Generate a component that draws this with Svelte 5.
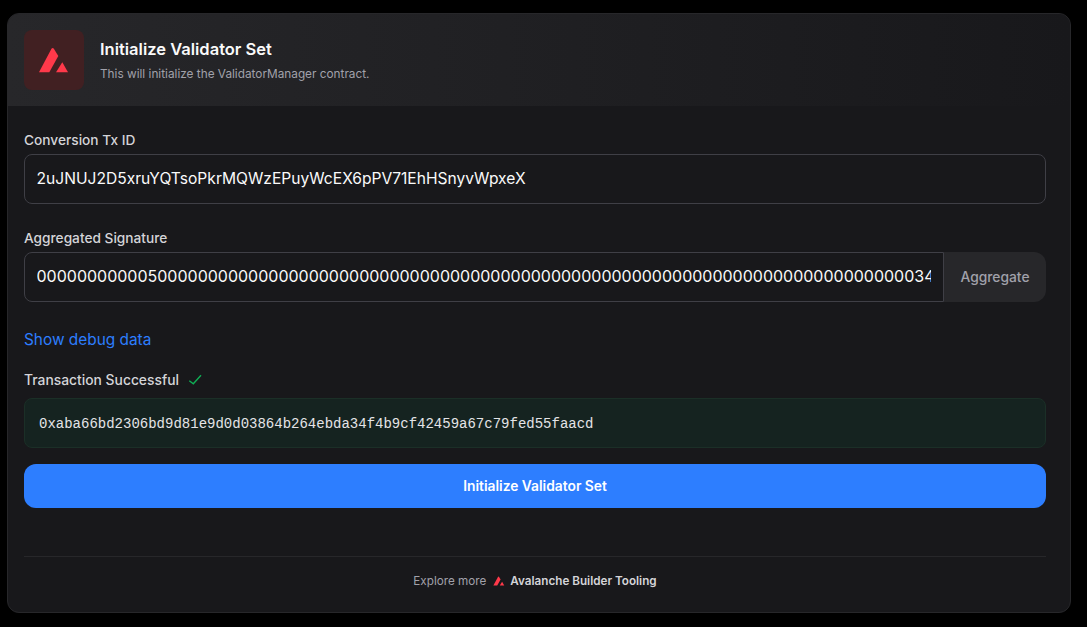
<script>
	const txId = '2uJNUJ2D5xruYQTsoPkrMQWzEPuyWcEX6pPV71EhHSnyvWpxeX';
	const signature = '000000000005000000000000000000000000000000000000000000000000000000000000000000000000000340000000000000000';
	const txHash = '0xaba66bd2306bd9d81e9d0d03864b264ebda34f4b9cf42459a67c79fed55faacd';
</script>

<svelte:head><title>Initialize Validator Set</title></svelte:head>

<main class="page">
	<section class="card">
		<header class="head">
			<div class="logo">
				<svg width="32" height="26" viewBox="0 0 32 26" aria-hidden="true">
					<path d="M13.6 1.6 Q14.7 0.2 15.7 1.6 L20.3 9 L11.3 25.3 H1 Z" fill="#ff394a" />
					<path d="M24.3 15.3 L30 25.3 H18 Z" fill="#ff394a" />
				</svg>
			</div>
			<div class="titles">
				<h1>Initialize Validator Set</h1>
				<p>This will initialize the ValidatorManager contract.</p>
			</div>
		</header>

		<div class="body">
			<div class="field">
				<label for="tx">Conversion Tx ID</label>
				<input id="tx" class="tx" value={txId} />
			</div>

			<div class="field">
				<label for="sig">Aggregated Signature</label>
				<div class="joined">
					<input id="sig" value={signature} />
					<button class="aggregate">Aggregate</button>
				</div>
			</div>

			<button class="debug">Show debug data</button>

			<div class="success-label">
				<span>Transaction Successful</span>
				<svg width="14" height="14" viewBox="0 0 14 14" fill="none" aria-hidden="true">
					<path d="M1.3 7.7 L5.3 10.7 L13 2.3" stroke="#0fae55" stroke-width="1.4" />
				</svg>
			</div>
			<div class="hash">{txHash}</div>

			<button class="primary">Initialize Validator Set</button>

			<footer class="foot">
				<span class="more">Explore more</span>
				<svg width="12" height="10" viewBox="0 0 32 26" aria-hidden="true">
					<path d="M13.6 1.6 Q14.7 0.2 15.7 1.6 L20.3 9 L11.3 25.3 H1 Z" fill="#ff394a" />
					<path d="M24.3 15.3 L30 25.3 H18 Z" fill="#ff394a" />
				</svg>
				<span class="brand">Avalanche Builder Tooling</span>
			</footer>
		</div>
	</section>
</main>

<style>
	:global(body) { margin: 0; background: #000; font-family: Inter, "Liberation Sans", sans-serif; }
	.page { padding: 13px 16px 14px 7px; height: 600px; }
	.card {
		display: flex;
		flex-direction: column;
		height: 100%;
		box-sizing: border-box;
		background: #18181b;
		border: 1px solid #27272a;
		border-radius: 12px;
		overflow: hidden;
	}
	.head {
		display: flex;
		align-items: center;
		gap: 16px;
		padding: 16px;
		background: linear-gradient(to right, #27272a, #18181b);
	}
	.logo {
		display: flex;
		align-items: center;
		justify-content: center;
		width: 60px;
		height: 60px;
		border-radius: 8px;
		background: #412022;
	}
	.titles { padding-bottom: 2px; }
	h1 { margin: 0 0 5px; font-size: 16.5px; line-height: 24px; font-weight: 600; color: #fafafa; }
	.head p { margin: 0; font-size: 11.8px; line-height: 16px; color: #a1a1aa; }
	.body { display: flex; flex-direction: column; flex: 1; padding: 24px 24px 0 16px; }
	.field { margin-bottom: 24px; }
	label {
		display: block;
		margin-bottom: 4px;
		font-size: 13.7px;
		line-height: 20px;
		font-weight: 500;
		color: #d4d4d8;
	}
	input {
		display: block;
		width: 100%;
		height: 50px;
		box-sizing: border-box;
		padding: 0 12px 2px 11.5px;
		background: #18181b;
		border: 1px solid #3f3f46;
		border-radius: 8px;
		outline: none;
		color: #fafafa;
		font: 400 16px Inter, "Liberation Sans", sans-serif;
	}
	.tx { font-size: 15.6px; }
	.joined { display: flex; }
	.joined input { flex: 1; min-width: 0; border-radius: 8px 0 0 8px; }
	.aggregate {
		width: 102px;
		border: none;
		border-radius: 0 12px 12px 0;
		background: #27272a;
		color: #a1a1aa;
		font: 500 13.8px Inter, "Liberation Sans", sans-serif;
	}
	.debug {
		align-self: flex-start;
		margin: 2px 0 0;
		padding: 0;
		border: none;
		background: none;
		color: #2d7eff;
		font: 400 15.4px/24px Inter, "Liberation Sans", sans-serif;
	}
	.success-label {
		display: flex;
		align-items: center;
		gap: 9px;
		margin-top: 18px;
		font-size: 13.85px;
		line-height: 20px;
		font-weight: 500;
		color: #d4d4d8;
	}
	.hash {
		display: flex;
		align-items: center;
		height: 50px;
		box-sizing: border-box;
		margin-top: 8px;
		padding: 1px 14px 0;
		background: #152320;
		border: 1px solid #1b2f27;
		border-radius: 8px;
		color: #e4e4e7;
		font: 400 14px "Liberation Mono", monospace;
	}
	.primary {
		height: 44px;
		margin-top: 16px;
		border: none;
		border-radius: 12px;
		background: #2d7eff;
		color: #fff;
		font: 600 13.8px Inter, "Liberation Sans", sans-serif;
	}
	.foot {
		display: flex;
		align-items: center;
		justify-content: center;
		gap: 5px;
		margin-top: 48px;
		padding-top: 16px;
		border-top: 1px solid #27272a;
		font-size: 11.7px;
		line-height: 16px;
	}
	.more { color: #a1a1aa; margin-right: 2px; }
	.brand { color: #d4d4d8; font-weight: 600; }
</style>
